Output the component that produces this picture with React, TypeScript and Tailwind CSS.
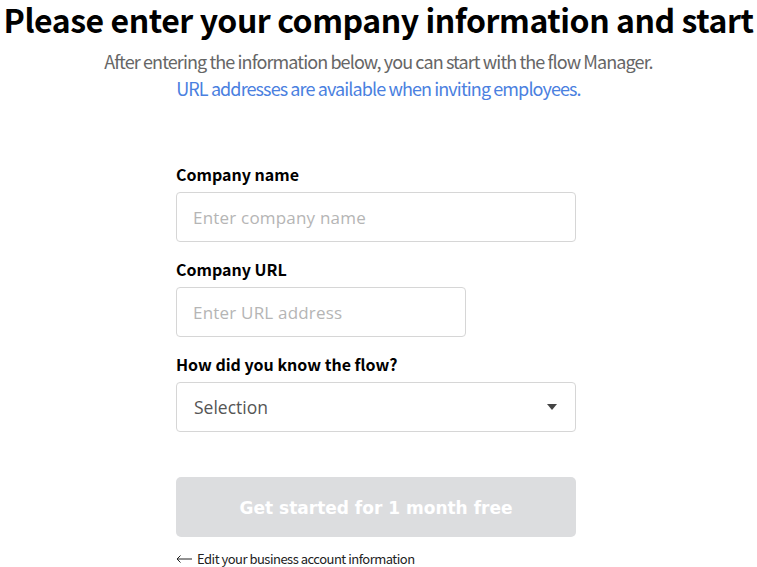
export default function App() {
  return (
    <div
      className="w-[757px] h-[567px] bg-white overflow-hidden flex flex-col items-center"
      style={{ fontFamily: '"Noto Sans CJK KR", "Noto Sans", sans-serif' }}
    >
      {/* Title */}
      <h1 className="text-[32px] leading-[38px] font-bold text-black whitespace-nowrap tracking-[-0.45px]">
        Please enter your company information and start
      </h1>
      <p className="mt-[10px] text-[18px] leading-[27px] text-[#666666] tracking-[-0.9px] text-center">
        After entering the information below, you can start with the flow Manager.
        <br />
        <span className="text-[#4a80e0]">URL addresses are available when inviting employees.</span>
      </p>

      {/* Form */}
      <div className="mt-[60px] self-start ml-[176px] w-[400px] flex flex-col">
        <label className="text-[16px] leading-[24px] font-bold text-black">Company name</label>
        <input
          className="mt-[6px] h-[50px] w-full rounded-[4px] border border-[#d6d6d6] px-[16px] text-[17px] outline-none placeholder:text-[#b5b5b5]"
          style={{ fontFamily: '"Open Sans", sans-serif', letterSpacing: '0.2px' }}
          placeholder="Enter company name"
        />

        <label className="mt-[15px] text-[16px] leading-[24px] font-bold text-black">Company URL</label>
        <input
          className="mt-[6px] h-[50px] w-[290px] rounded-[4px] border border-[#d6d6d6] px-[16px] text-[17px] outline-none placeholder:text-[#b5b5b5]"
          style={{ fontFamily: '"Open Sans", sans-serif', letterSpacing: '0.2px' }}
          placeholder="Enter URL address"
        />

        <label className="mt-[15px] text-[16px] leading-[24px] font-bold text-black">How did you know the flow?</label>
        <div
          className="mt-[6px] h-[50px] w-full rounded-[4px] border border-[#d6d6d6] pl-[17px] pr-[18px] flex items-center justify-between text-[17.5px] text-[#555555]"
          style={{ fontFamily: '"Open Sans", sans-serif' }}
        >
          <span>Selection</span>
          <svg width="10" height="6" viewBox="0 0 10 6">
            <path d="M0 0 H10 L5 6 Z" fill="#444444" />
          </svg>
        </div>

        <button
          className="mt-[45px] h-[60px] w-full rounded-[5px] bg-[#dcdddf] pt-[4px] text-white text-[17px] font-bold"
          style={{ fontFamily: '"DejaVu Sans", sans-serif' }}
        >
          Get started for 1 month free
        </button>

        <div className="mt-[12px] text-[13px] leading-[20px] text-[#222222] tracking-[-0.5px] flex items-center">
          <svg width="16" height="8" viewBox="0 0 16 8" className="mr-[5px]">
            <path d="M16 4 H1 M4.5 0.5 L1 4 L4.5 7.5" stroke="#222222" strokeWidth="1" fill="none" />
          </svg>
          Edit your business account information
        </div>
      </div>
    </div>
  );
}
